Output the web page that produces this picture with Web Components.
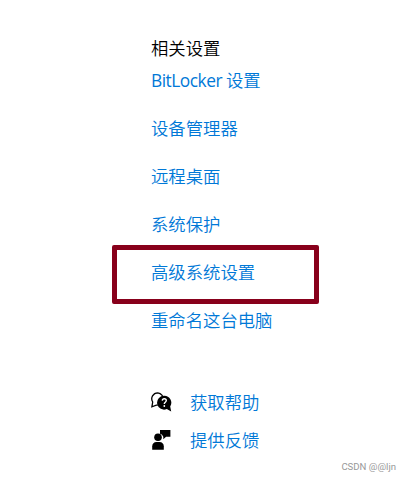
<!DOCTYPE html>
<html lang="zh-CN">
<head>
<meta charset="UTF-8">
<title>相关设置</title>
<style>
    body {
        margin: 0;
        background: #fff;
    }
    .latin {
        font-size: 17.35px;
        font-weight: 400;
        letter-spacing: -0.5px;
    }
</style>
</head>
<body>
<settings-panel heading="相关设置">
    <settings-link><span><span class="latin">BitLocker </span>设置</span></settings-link>
    <settings-link>设备管理器</settings-link>
    <settings-link>远程桌面</settings-link>
    <settings-link>系统保护</settings-link>
    <settings-link marked>高级系统设置</settings-link>
    <settings-link>重命名这台电脑</settings-link>
    <support-link slot="support" icon="help">获取帮助</support-link>
    <support-link slot="support" icon="feedback">提供反馈</support-link>
    <span slot="credit">CSDN @@ljn</span>
</settings-panel>

<script>
/**
 * Settings link, optionally framed with a marker box
 */
class SettingsLink extends HTMLElement {
    constructor() {
        super();
        this.attachShadow({ mode: 'open' });
        this.shadowRoot.innerHTML = `
            <style>
                :host {
                    display: flex;
                    align-items: center;
                    position: relative;
                    height: 48px;
                    color: var(--color-link, #0078d7);
                    white-space: nowrap;
                }
                :host([marked])::after {
                    content: '';
                    position: absolute;
                    box-sizing: border-box;
                    left: -39px;
                    top: -3px;
                    width: 207px;
                    height: 59px;
                    border: 5px solid #88001b;
                    border-radius: 2px;
                }
            </style>
            <slot></slot>
        `;
    }
}

/**
 * Link with an icon in front
 */
class SupportLink extends HTMLElement {
    constructor() {
        super();
        this.attachShadow({ mode: 'open' });
    }

    connectedCallback() {
        this.shadowRoot.innerHTML = `
            <style>
                :host {
                    display: flex;
                    align-items: center;
                    gap: 18px;
                    height: 38px;
                    color: var(--color-link, #0078d7);
                    white-space: nowrap;
                }
                svg {
                    display: block;
                    width: 21px;
                    height: 22px;
                    flex-shrink: 0;
                }
            </style>
            <svg viewBox="0 0 21 22" aria-hidden="true">${this.getIcon(this.getAttribute('icon'))}</svg>
            <slot></slot>
        `;
    }

    getIcon(name) {
        const icons = {
            help: `
                <path d="M6.8 1.8a6 6 0 0 0-5.1 9.2L.9 15.8l4.4-1.7a6 6 0 1 0 1.5-12.3z" fill="#fff" stroke="#000" stroke-width="1.3"/>
                <path d="M13.2 4.8a6.9 6.9 0 1 0 2.6 13.2l4.4 2.4-1-5a6.9 6.9 0 0 0-6-10.6z"/>
                <path d="M11.3 9.6c.1-2.6 4-2.5 4 0 0 1.6-2 1.6-2 3.3" fill="none" stroke="#fff" stroke-width="1.4"/>
                <circle cx="13.3" cy="15" r=".9" fill="#fff"/>`,
            feedback: `
                <path d="M9 1h10.4v6.8h-4.3l-2.8 2.5V7.8a5 5 0 0 0-3.3-3z"/>
                <circle cx="7" cy="8.2" r="3.8"/>
                <path d="M1.2 20.8v-3.6c0-2.7 1.8-4.3 4.3-4.3h3c2.5 0 4.3 1.6 4.3 4.3v3.6z"/>`
        };
        return icons[name] || '';
    }
}

/**
 * Column with the heading, the links, the support links and the credit
 */
class SettingsPanel extends HTMLElement {
    constructor() {
        super();
        this.attachShadow({ mode: 'open' });
    }

    connectedCallback() {
        this.shadowRoot.innerHTML = `
            <style>
                :host {
                    display: flex;
                    flex-direction: column;
                    box-sizing: border-box;
                    height: 481px;
                    padding: 39px 14px 7px 151px;
                    overflow: hidden;
                    font: 350 17.35px/18px 'Open Sans', 'Noto Sans CJK SC', sans-serif;
                    color: #000;
                }
                h2 {
                    margin: 0 0 -1px;
                    font: inherit;
                }
                .support {
                    margin-top: 39px;
                }
                .credit {
                    margin-top: auto;
                    align-self: flex-end;
                    font: 9.6px/14px Roboto, sans-serif;
                    color: #999;
                }
            </style>
            <h2>${this.getAttribute('heading') || ''}</h2>
            <nav><slot></slot></nav>
            <div class="support"><slot name="support"></slot></div>
            <div class="credit"><slot name="credit"></slot></div>
        `;
    }
}

customElements.define('settings-link', SettingsLink);
customElements.define('support-link', SupportLink);
customElements.define('settings-panel', SettingsPanel);
</script>
</body>
</html>
